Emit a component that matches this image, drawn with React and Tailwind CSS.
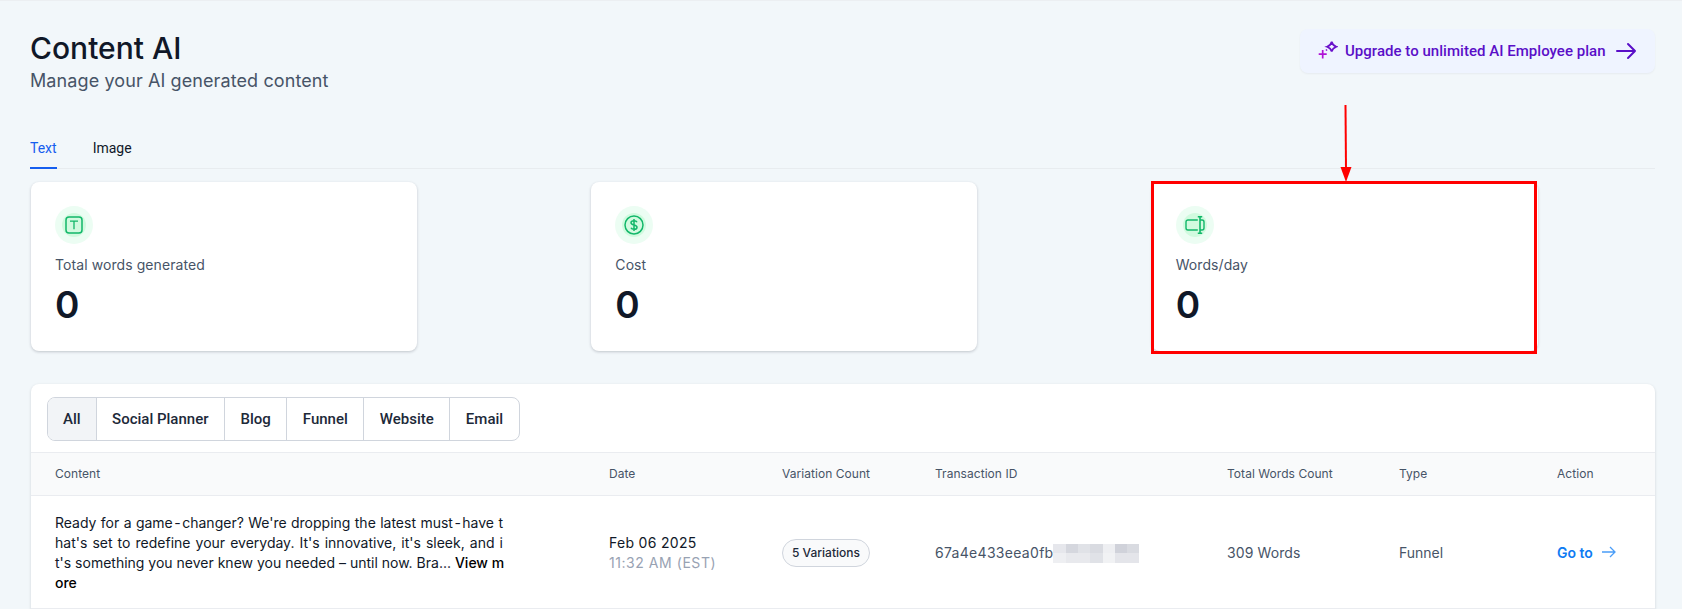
const filters = ["All", "Social Planner", "Blog", "Funnel", "Website", "Email"];

const columns = "grid grid-cols-[554px_173px_153px_292px_172px_158px_1fr]";

const blur = [
  "bg-[#e6e7ec]", "bg-[#d5d7de]", "bg-[#e0e2e7]", "bg-[#d9dbe1]", "bg-[#eeeff2]", "bg-[#d0d2da]", "bg-[#d9dbe1]",
  "bg-[#eeeff2]", "bg-[#e8e9ed]", "bg-[#e8e9ed]", "bg-[#e0e2e7]", "bg-[#f1f2f4]", "bg-[#e4e5ea]", "bg-[#e4e5ea]",
];

const justified = "block text-justify [text-align-last:justify]";

function Hyphen() {
  return <span className="px-[1.5px]">-</span>;
}

function TextIcon() {
  return (
    <svg width="18" height="18" viewBox="0 0 18 18" fill="none">
      <rect x="1" y="1" width="16" height="16" rx="3" fill="#d1fadf" stroke="#12b76a" strokeWidth="1.5" />
      <path d="M5 5.200h8M9 5.200v8" stroke="#12b76a" strokeWidth="1.3" />
    </svg>
  );
}

function CostIcon() {
  return (
    <svg width="20" height="20" viewBox="0 0 20 20" fill="none" stroke="#12b76a">
      <circle cx="10" cy="10" r="9" strokeWidth="1.5" />
      <path d="M13 7.300c-.4-1-1.500-1.600-3-1.600-1.800 0-3 .8-3 2.100 0 2.900 6 1.500 6 4.400 0 1.300-1.200 2.100-3 2.100-1.500 0-2.600-.6-3-1.600M10 4v12" strokeWidth="1.500" />
    </svg>
  );
}

function WordsIcon() {
  return (
    <svg width="20" height="18" viewBox="0 0 20 18" fill="none" stroke="#12b76a" strokeWidth="1.4">
      <path d="M12.800 4H3a2 2 0 0 0-2 2v6a2 2 0 0 0 2 2h9.800" />
      <path d="M15 4h2a2 2 0 0 1 2 2v6a2 2 0 0 1-2 2h-2" />
      <path d="M12.800.8h4.400M12.800 17.200h4.400M15 .8v16.400" strokeWidth="1.600" />
    </svg>
  );
}

function Sparkle() {
  return (
    <svg width="20" height="20" viewBox="0 0 20 20" fill="none" strokeWidth="1.7">
      <path d="M13.700.8c.6 2.700 1.700 3.900 4.700 4.900-3 1-4.100 2.200-4.700 4.900-.6-2.700-1.700-3.900-4.700-4.900 3-1 4.100-2.200 4.700-4.900Z" stroke="#6a11cb" />
      <path d="M4.700 9v8.500M.7 13.200h8" stroke="#b012d6" />
      <path d="M8 9.500l1-1" stroke="#8a12d0" />
    </svg>
  );
}

function ButtonArrow() {
  return (
    <svg width="22" height="22" viewBox="0 0 22 22" fill="none" stroke="#5a0fc8" strokeWidth="2" strokeLinecap="round" strokeLinejoin="round">
      <path d="M2 11h18M13 4l7 7-7 7" />
    </svg>
  );
}

function GoArrow() {
  return (
    <svg width="18" height="18" viewBox="0 0 18 18" fill="none" stroke="#4a9df8" strokeWidth="1.3" className="-mt-[3px]">
      <path d="M2 9h13M10 4l5 5-5 5" />
    </svg>
  );
}

function StatCard({ icon, label }) {
  return (
    <div className="h-[169px] w-[386px] rounded-lg bg-white pl-6 pt-6 shadow-[0_1px_3px_rgba(16,24,40,0.22)]">
      <div className="flex h-[38px] w-[38px] items-center justify-center rounded-full bg-[#ecfdf3]">
        <div className="flex h-[24px] w-[24px] items-center justify-center rounded-full bg-[#d1fadf]">{icon}</div>
      </div>
      <div className="mt-[11px] text-sm leading-5 tracking-[0.08px] text-[#475467]">{label}</div>
      <div className="mt-[8px] text-[37px] font-semibold leading-[44px] text-[#101828]">0</div>
    </div>
  );
}

export default function App() {
  return (
    <div className="relative h-[609px] w-[1682px] overflow-hidden border-t border-[#eceff2] bg-[#f2f7fa] font-['Inter',sans-serif]">
      {/* header */}
      <div className="flex items-start justify-between pl-[30px] pr-[27px] pt-[28px]">
        <div>
          <h1 className="text-[30px] font-medium leading-[38px] text-[#101828]">Content AI</h1>
          <p className="mt-[2px] text-lg leading-[24px] tracking-[0.1px] text-[#475467]">Manage your AI generated content</p>
        </div>
        <button className="flex h-[44px] w-[355px] items-center gap-[7px] rounded-lg bg-[#eff4ff] pl-[18px] shadow-[0_1px_2px_rgba(16,24,40,0.05)] font-['Roboto',sans-serif] text-[15px] font-medium tracking-[0.03px] text-[#5a0fc8]">
          <Sparkle />
          Upgrade to unlimited AI Employee plan
          <span className="ml-[2px]">
            <ButtonArrow />
          </span>
        </button>
      </div>

      {/* tabs */}
      <div className="ml-[30px] mr-[27px] mt-[37px] flex h-[39px] gap-[36px] border-b border-[#e8ecef] font-['Roboto',sans-serif] text-sm">
        <div className="h-[39px] border-b-2 border-[#155eef] pt-[8px] text-[#155eef]">Text</div>
        <div className="pt-[8px] text-[#101828]">Image</div>
      </div>

      {/* stat cards */}
      <div className="ml-[31px] mr-[27px] mt-[13px] grid grid-cols-3 gap-x-[57px]">
        <StatCard icon={<TextIcon />} label="Total words generated" />
        <StatCard icon={<CostIcon />} label="Cost" />
        <StatCard icon={<WordsIcon />} label="Words/day" />
      </div>

      {/* table card */}
      <div className="ml-[31px] mr-[27px] mt-[33px] rounded-t-lg bg-white shadow-[0_1px_3px_rgba(16,24,40,0.16)]">
        <div className="h-[68px] pl-[16px] pt-[13px]">
          <div className="flex h-[44px] w-fit overflow-hidden rounded-lg border border-[#d0d5dd] font-['Roboto',sans-serif] text-[15px] font-medium text-[#1d2939]">
            {filters.map((f, i) => (
              <div
                key={f}
                className={i === 0 ? "flex items-center bg-[#f2f4f7] px-[15px]" : "flex items-center border-l border-[#d0d5dd] px-[15.5px]"}
              >
                {f}
              </div>
            ))}
          </div>
        </div>

        <div className={`${columns} h-[44px] items-center border-y border-[#eaecf0] bg-[#f9fafb] pl-[24px] text-xs tracking-[0.05px] text-[#475467]`}>
          <div>Content</div>
          <div>Date</div>
          <div>Variation Count</div>
          <div>Transaction ID</div>
          <div>Total Words Count</div>
          <div>Type</div>
          <div>Action</div>
        </div>

        <div className={`${columns} h-[113px] items-center border-b border-[#eaecf0] pl-[24px] pt-[2px] text-sm text-[#475467]`}>
          <div className="w-[448px] whitespace-nowrap leading-5 text-[#101828]">
            <span className={justified}>Ready for a game<Hyphen />changer? We're dropping the latest must<Hyphen />have t</span>
            <span className={justified}>hat's set to redefine your everyday. It's innovative, it's sleek, and i</span>
            <span className={justified}>
              t's something you never knew you needed – until now. Bra... <span className="font-medium text-black">View m</span>
            </span>
            <span className="block font-medium text-black">ore</span>
          </div>
          <div className="leading-5">
            <div className="tracking-[0.3px] text-[#101828]">Feb 06 2025</div>
            <div className="tracking-[0.55px] text-[#98a2b3]">11:32 AM (EST)</div>
          </div>
          <div>
            <span className="inline-flex h-[28px] items-center rounded-full border border-[#d0d5dd] bg-[#f9fafb] px-[9px] text-xs font-medium text-[#1d2939]">
              5 Variations
            </span>
          </div>
          <div className="flex items-center">
            <span className="tracking-[0.3px]">67a4e433eea0fb</span>
            <div className="grid h-[19px] w-[86px] grid-cols-7 grid-rows-2">
              {blur.map((c, i) => (
                <div key={i} className={c} />
              ))}
            </div>
          </div>
          <div className="tracking-[0.1px]">309 Words</div>
          <div>Funnel</div>
          <div className="flex items-center gap-[7px] font-semibold text-[#0e7bf3]">
            Go to
            <GoArrow />
          </div>
        </div>
        <div className="h-[10px]" />
      </div>

      {/* red annotation */}
      <div className="absolute left-[1151px] top-[180px] h-[173px] w-[386px] border-[3px] border-[#ff0000]" />
      <svg className="absolute left-[1338px] top-[103px]" width="16" height="78" viewBox="0 0 16 78">
        <path d="M7.500 1 8 66" stroke="#ff0000" strokeWidth="2" fill="none" />
        <path d="M2.500 63h11L8 78Z" fill="#ff0000" />
      </svg>
    </div>
  );
}
